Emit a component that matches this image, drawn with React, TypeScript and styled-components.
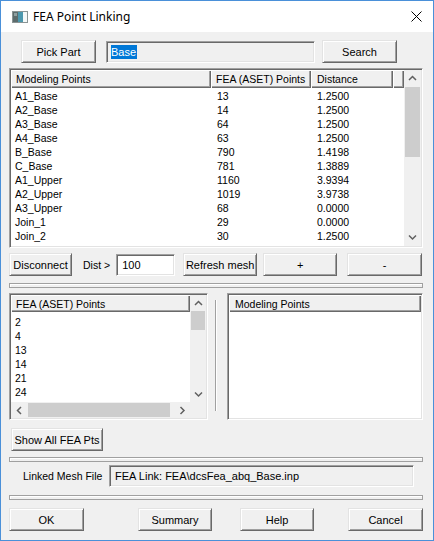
import React from "react";
import styled, { createGlobalStyle } from "styled-components";

const Global = createGlobalStyle`
  html, body { margin: 0; padding: 0; background: #ffffff; }
  body {
    font-family: Tahoma, "Liberation Sans", Arial, sans-serif;
    font-size: 10.5px;
    color: #000;
  }
  * { box-sizing: border-box; }
`;

const Window = styled.div`
  width: 434px;
  height: 541px;
  border: 1px solid #4a90d9;
  display: flex;
  flex-direction: column;
  background: #f0f0f0;
  overflow: hidden;
`;

const TitleBar = styled.div`
  height: 31px;
  flex: none;
  background: #ffffff;
  display: flex;
  align-items: center;
  padding-left: 11px;
`;

const Title = styled.div`
  margin-left: 5px;
  font-family: "Segoe UI", "Noto Sans", "Open Sans", sans-serif;
  font-size: 12px;
  color: #000;
  flex: 1;
`;

const CloseIcon = styled.svg`
  margin-right: 11px;
  flex: none;
`;

const Row = styled.div<{ $mt: number; $pl?: number; $h?: number }>`
  display: flex;
  align-items: center;
  flex: none;
  margin-top: ${(p) => p.$mt}px;
  padding-left: ${(p) => p.$pl ?? 8}px;
  height: ${(p) => (p.$h ? `${p.$h}px` : "auto")};
`;

const Btn = styled.button<{ $w: number; $ml?: number }>`
  flex: none;
  width: ${(p) => p.$w}px;
  height: 23px;
  margin: 0 0 0 ${(p) => p.$ml ?? 0}px;
  padding: 0;
  font: inherit;
  font-size: 11px;
  color: #000;
  background: #f0f0f0;
  border: 1px solid;
  border-color: #e3e3e3 #696969 #696969 #e3e3e3;
  box-shadow: inset 1px 1px #ffffff, inset -1px -1px #a0a0a0;
`;

const ReadField = styled.div<{ $w: number; $h: number; $ml?: number; $pl?: number }>`
  flex: none;
  width: ${(p) => p.$w}px;
  height: ${(p) => p.$h}px;
  margin-left: ${(p) => p.$ml ?? 0}px;
  padding-left: ${(p) => p.$pl ?? 4}px;
  display: flex;
  align-items: center;
  font-size: 11px;
  background: #f0f0f0;
  border: 1px solid;
  border-color: #a0a0a0 #ffffff #ffffff #a0a0a0;
  box-shadow: inset 1px 1px #696969, inset -1px -1px #e3e3e3;
  white-space: nowrap;
`;

const Sel = styled.span`
  background: #0078d7;
  color: #ffffff;
  line-height: 14px;
  padding: 0 1px 0 0;
`;

const EditBox = styled(ReadField)`
  background: #ffffff;
`;

const Label = styled.span<{ $ml?: number; $w?: number }>`
  flex: none;
  margin-left: ${(p) => p.$ml ?? 0}px;
  width: ${(p) => (p.$w ? `${p.$w}px` : "auto")};
  white-space: nowrap;
`;

const Sunken = styled.div<{ $w: number; $h: number; $ml?: number }>`
  flex: none;
  width: ${(p) => p.$w}px;
  height: ${(p) => p.$h}px;
  margin-left: ${(p) => p.$ml ?? 0}px;
  border: 1px solid;
  border-color: #a0a0a0 #ffffff #ffffff #a0a0a0;
  box-shadow: inset 1px 1px #696969, inset -1px -1px #e3e3e3;
  padding: 1px;
  overflow: hidden;
`;

const TopListInner = styled.div`
  display: flex;
  height: 100%;
  background: #ffffff;
`;

const ListMain = styled.div`
  flex: 1;
  min-width: 0;
  display: flex;
  flex-direction: column;
  overflow: hidden;
`;

const COLS = "200px 100px 82px 1fr";

const HeaderRow = styled.div<{ $cols: string; $h: number }>`
  display: grid;
  grid-template-columns: ${(p) => p.$cols};
  height: ${(p) => p.$h}px;
  flex: none;
`;

const HeaderCell = styled.div<{ $pl?: number }>`
  background: #f0f0f0;
  padding-left: ${(p) => p.$pl ?? 5}px;
  display: flex;
  align-items: center;
  white-space: nowrap;
  overflow: hidden;
  box-shadow: inset 1px 1px #ffffff, inset -1px -1px #696969, inset -2px -2px #a0a0a0;
`;

const Body = styled.div<{ $pt: number }>`
  flex: 1;
  padding-top: ${(p) => p.$pt}px;
  overflow: hidden;
  background: #ffffff;
`;

const DataRow = styled.div<{ $cols: string }>`
  display: grid;
  grid-template-columns: ${(p) => p.$cols};
  height: 14px;
  line-height: 14px;
`;

const Cell = styled.div<{ $pl?: number }>`
  padding-left: ${(p) => p.$pl ?? 5}px;
  white-space: nowrap;
  overflow: hidden;
`;

const VScroll = styled.div<{ $w: number }>`
  flex: none;
  width: ${(p) => p.$w}px;
  display: flex;
  flex-direction: column;
  background: #f0f0f0;
`;

const ArrowBox = styled.div<{ $s: number }>`
  flex: none;
  width: ${(p) => p.$s}px;
  height: ${(p) => p.$s}px;
  display: flex;
  align-items: center;
  justify-content: center;
`;

const VThumb = styled.div<{ $h: number }>`
  flex: none;
  height: ${(p) => p.$h}px;
  margin: 0 1px;
  background: #cdcdcd;
`;

const Spacer = styled.div`
  flex: 1;
`;

const Separator = styled.div<{ $mt: number }>`
  flex: none;
  margin: ${(p) => p.$mt}px 0 0 8px;
  width: 414px;
  height: 5px;
  border: 1px solid #a0a0a0;
  box-shadow: inset 1px 1px #ffffff;
`;

const SmallList = styled.div`
  display: grid;
  grid-template-columns: 1fr 16px;
  grid-template-rows: 1fr 16px;
  height: 100%;
  background: #ffffff;
`;

const HScroll = styled.div`
  display: flex;
  align-items: center;
  background: #f0f0f0;
`;

const HThumb = styled.div<{ $w: number }>`
  flex: none;
  width: ${(p) => p.$w}px;
  height: 14px;
  margin-left: 1px;
  background: #cdcdcd;
`;

const Corner = styled.div`
  background: #f0f0f0;
`;

const Splitter = styled.div`
  flex: none;
  align-self: flex-start;
  margin: 7px 0 0 7px;
  width: 2px;
  height: 111px;
  border-left: 1px solid #a0a0a0;
  border-right: 1px solid #ffffff;
`;

const RightInner = styled.div`
  height: 100%;
  display: flex;
  flex-direction: column;
  background: #ffffff;
`;

const Chevron = ({ dir }: { dir: "up" | "down" | "left" | "right" }) => {
  const d =
    dir === "up"
      ? "M1 5 L4.5 1.5 L8 5"
      : dir === "down"
      ? "M1 1.5 L4.5 5 L8 1.5"
      : dir === "left"
      ? "M5 1 L1.5 4.5 L5 8"
      : "M1.5 1 L5 4.5 L1.5 8";
  const w = dir === "up" || dir === "down" ? 9 : 7;
  const h = dir === "up" || dir === "down" ? 7 : 9;
  return (
    <svg width={w} height={h} viewBox={`0 0 ${w} ${h}`}>
      <path d={d} fill="none" stroke="#606060" strokeWidth="1.5" />
    </svg>
  );
};

const AppIcon = () => (
  <svg width="16" height="12" viewBox="0 0 16 12">
    <rect x="0.5" y="0.5" width="15" height="11" fill="#e8ecec" stroke="#8a9494" />
    <rect x="1" y="1" width="5" height="10" fill="#5d6c6c" />
    <rect x="6" y="1" width="5" height="10" fill="#4c98ae" />
    <rect x="11" y="1" width="4" height="10" fill="#f4f8f8" />
    <rect x="2" y="2" width="3" height="3" fill="#8fa0a0" />
  </svg>
);

const rows: [string, string, string][] = [
  ["A1_Base", "13", "1.2500"],
  ["A2_Base", "14", "1.2500"],
  ["A3_Base", "64", "1.2500"],
  ["A4_Base", "63", "1.2500"],
  ["B_Base", "790", "1.4198"],
  ["C_Base", "781", "1.3889"],
  ["A1_Upper", "1160", "3.9394"],
  ["A2_Upper", "1019", "3.9738"],
  ["A3_Upper", "68", "0.0000"],
  ["Join_1", "29", "0.0000"],
  ["Join_2", "30", "1.2500"],
  ["Join_3", "31", "1.2500"],
];

const feaPts = ["2", "4", "13", "14", "21", "24", "30"];

export default function App() {
  return (
    <>
      <Global />
      <Window>
        <TitleBar>
          <AppIcon />
          <Title>FEA Point Linking</Title>
          <CloseIcon width="11" height="11" viewBox="0 0 11 11">
            <path d="M0.5 0.5 L10.5 10.5 M10.5 0.5 L0.5 10.5" stroke="#000" strokeWidth="1" />
          </CloseIcon>
        </TitleBar>

        <Row $mt={8} $pl={20}>
          <Btn $w={75}>Pick Part</Btn>
          <ReadField $w={209} $h={22} $ml={10} $pl={4}>
            <Sel>Base</Sel>
          </ReadField>
          <Btn $w={75} $ml={7}>Search</Btn>
        </Row>

        <Row $mt={5}>
          <Sunken $w={414} $h={180}>
            <TopListInner>
              <ListMain>
                <HeaderRow $cols={COLS} $h={18}>
                  <HeaderCell $pl={5}>Modeling Points</HeaderCell>
                  <HeaderCell $pl={5}>FEA (ASET) Points</HeaderCell>
                  <HeaderCell $pl={6}>Distance</HeaderCell>
                  <HeaderCell />
                </HeaderRow>
                <Body $pt={1}>
                  {rows.map((r) => (
                    <DataRow $cols={COLS} key={r[0]}>
                      <Cell $pl={4}>{r[0]}</Cell>
                      <Cell $pl={6}>{r[1]}</Cell>
                      <Cell $pl={6}>{r[2]}</Cell>
                      <Cell />
                    </DataRow>
                  ))}
                </Body>
              </ListMain>
              <VScroll $w={17}>
                <ArrowBox $s={17}>
                  <Chevron dir="up" />
                </ArrowBox>
                <VThumb $h={70} />
                <Spacer />
                <ArrowBox $s={17}>
                  <Chevron dir="down" />
                </ArrowBox>
              </VScroll>
            </TopListInner>
          </Sunken>
        </Row>

        <Row $mt={5} $h={23}>
          <Btn $w={63}>Disconnect</Btn>
          <Label $ml={11}>Dist &gt;</Label>
          <EditBox $w={59} $h={22} $ml={6} $pl={5}>100</EditBox>
          <Btn $w={74} $ml={8}>Refresh mesh</Btn>
          <Btn $w={74} $ml={6}>+</Btn>
          <Btn $w={75} $ml={10}>-</Btn>
        </Row>

        <Separator $mt={7} />

        <Row $mt={5} $h={127}>
          <Sunken $w={199} $h={127}>
            <SmallList>
              <ListMain>
                <HeaderRow $cols="1fr" $h={17}>
                  <HeaderCell $pl={5}>FEA (ASET) Points</HeaderCell>
                </HeaderRow>
                <Body $pt={3}>
                  {feaPts.map((p) => (
                    <DataRow $cols="1fr" key={p}>
                      <Cell $pl={4}>{p}</Cell>
                    </DataRow>
                  ))}
                </Body>
              </ListMain>
              <VScroll $w={16}>
                <ArrowBox $s={16}>
                  <Chevron dir="up" />
                </ArrowBox>
                <VThumb $h={19} />
                <Spacer />
                <ArrowBox $s={16}>
                  <Chevron dir="down" />
                </ArrowBox>
              </VScroll>
              <HScroll>
                <ArrowBox $s={16}>
                  <Chevron dir="left" />
                </ArrowBox>
                <HThumb $w={142} />
                <Spacer />
                <ArrowBox $s={16}>
                  <Chevron dir="right" />
                </ArrowBox>
              </HScroll>
              <Corner />
            </SmallList>
          </Sunken>
          <Splitter />
          <Sunken $w={196} $h={127} $ml={10}>
            <RightInner>
              <HeaderRow $cols="1fr" $h={17}>
                <HeaderCell $pl={6}>Modeling Points</HeaderCell>
              </HeaderRow>
            </RightInner>
          </Sunken>
        </Row>

        <Row $mt={8} $pl={10}>
          <Btn $w={92}>Show All FEA Pts</Btn>
        </Row>

        <Separator $mt={6} />

        <Row $mt={3} $pl={22}>
          <Label $w={86}>Linked Mesh File</Label>
          <ReadField $w={305} $h={22} $pl={5}>
            FEA Link: FEA\dcsFea_abq_Base.inp
          </ReadField>
        </Row>

        <Separator $mt={8} />

        <Row $mt={8}>
          <Btn $w={75}>OK</Btn>
          <Btn $w={74} $ml={54}>Summary</Btn>
          <Btn $w={74} $ml={28}>Help</Btn>
          <Btn $w={75} $ml={34}>Cancel</Btn>
        </Row>
      </Window>
    </>
  );
}
